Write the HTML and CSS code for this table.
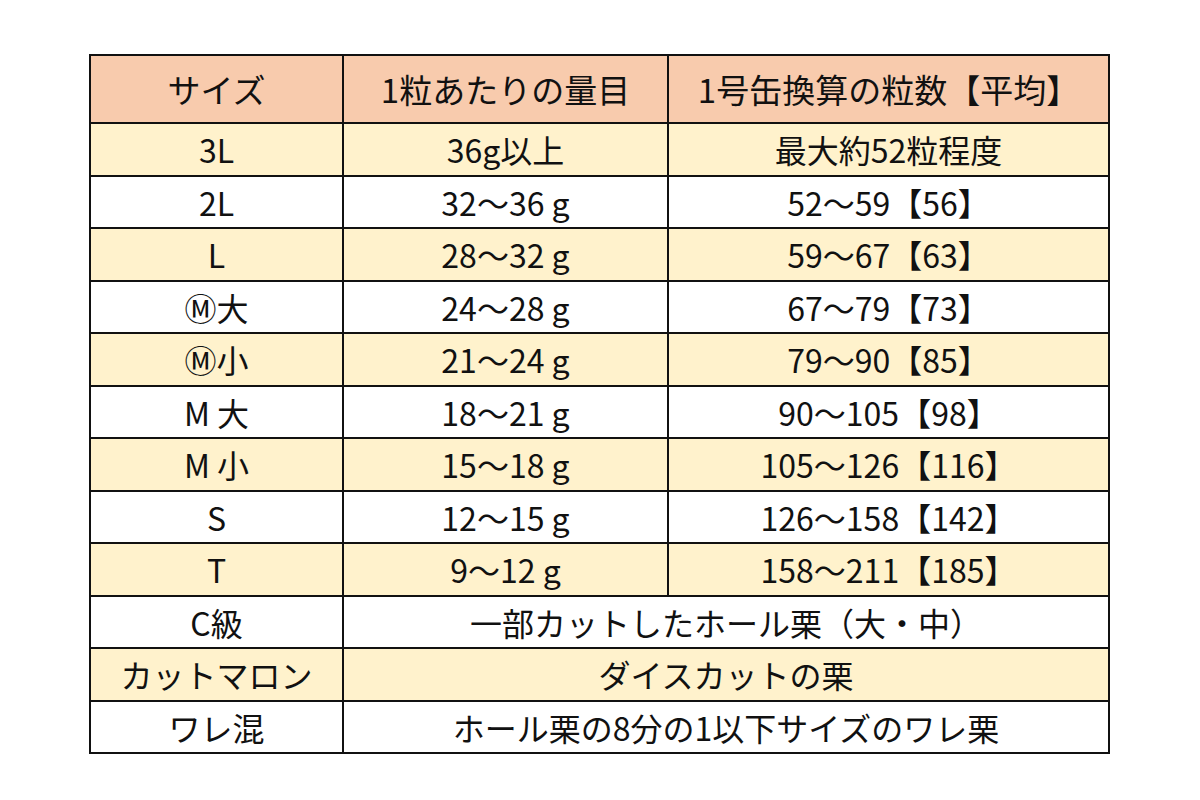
FILE: index.html
```html
<!DOCTYPE html>
<html lang="ja">
<head>
<meta charset="utf-8">
<link rel="stylesheet" href="styles.css">
</head>
<body>
<div class="page">
<table class="size-table">
  <colgroup>
    <col class="c1"><col class="c2"><col class="c3">
  </colgroup>
  <thead>
    <tr class="head">
      <th>サイズ</th>
      <th>1粒あたりの量目</th>
      <th>1号缶換算の粒数【平均】</th>
    </tr>
  </thead>
  <tbody>
    <tr class="alt"><td>3L</td><td>36g以上</td><td>最大約52粒程度</td></tr>
    <tr><td>2L</td><td>32～36 g</td><td>52～59【56】</td></tr>
    <tr class="alt"><td>L</td><td>28～32 g</td><td>59～67【63】</td></tr>
    <tr><td>Ⓜ大</td><td>24～28 g</td><td>67～79【73】</td></tr>
    <tr class="alt"><td>Ⓜ小</td><td>21～24 g</td><td>79～90【85】</td></tr>
    <tr><td>M 大</td><td>18～21 g</td><td>90～105【98】</td></tr>
    <tr class="alt"><td>M 小</td><td>15～18 g</td><td>105～126【116】</td></tr>
    <tr><td>S</td><td>12～15 g</td><td>126～158【142】</td></tr>
    <tr class="alt"><td>T</td><td>9～12 g</td><td>158～211【185】</td></tr>
    <tr><td>C級</td><td colspan="2">一部カットしたホール栗（大・中）</td></tr>
    <tr class="alt"><td>カットマロン</td><td colspan="2">ダイスカットの栗</td></tr>
    <tr><td>ワレ混</td><td colspan="2">ホール栗の8分の1以下サイズのワレ栗</td></tr>
  </tbody>
</table>
</div>
</body>
</html>
```

FILE: styles.css
```css
html, body {
  margin: 0;
  padding: 0;
  background: #ffffff;
}

.page {
  padding: 54px 0 0 89px;
}

.size-table {
  border-collapse: collapse;
  width: 1019px;
  table-layout: fixed;
  font-family: "Noto Sans CJK JP", "Noto Sans", sans-serif;
  color: #111;
  border: 2px solid #111;
}

.c1 { width: 253px; }
.c2 { width: 325px; }
.c3 { width: 441px; }

.size-table th,
.size-table td {
  border: 2px solid #111;
  text-align: center;
  vertical-align: middle;
  padding: 0;
  font-weight: 400;
  white-space: nowrap;
}

.size-table th {
  height: 66px;
  font-size: 33px;
  background: #f8cbad;
}

.size-table td {
  height: 50.5px;
  font-size: 32px;
  background: #ffffff;
}

.size-table tr.alt td {
  background: #fff2cc;
}
```
